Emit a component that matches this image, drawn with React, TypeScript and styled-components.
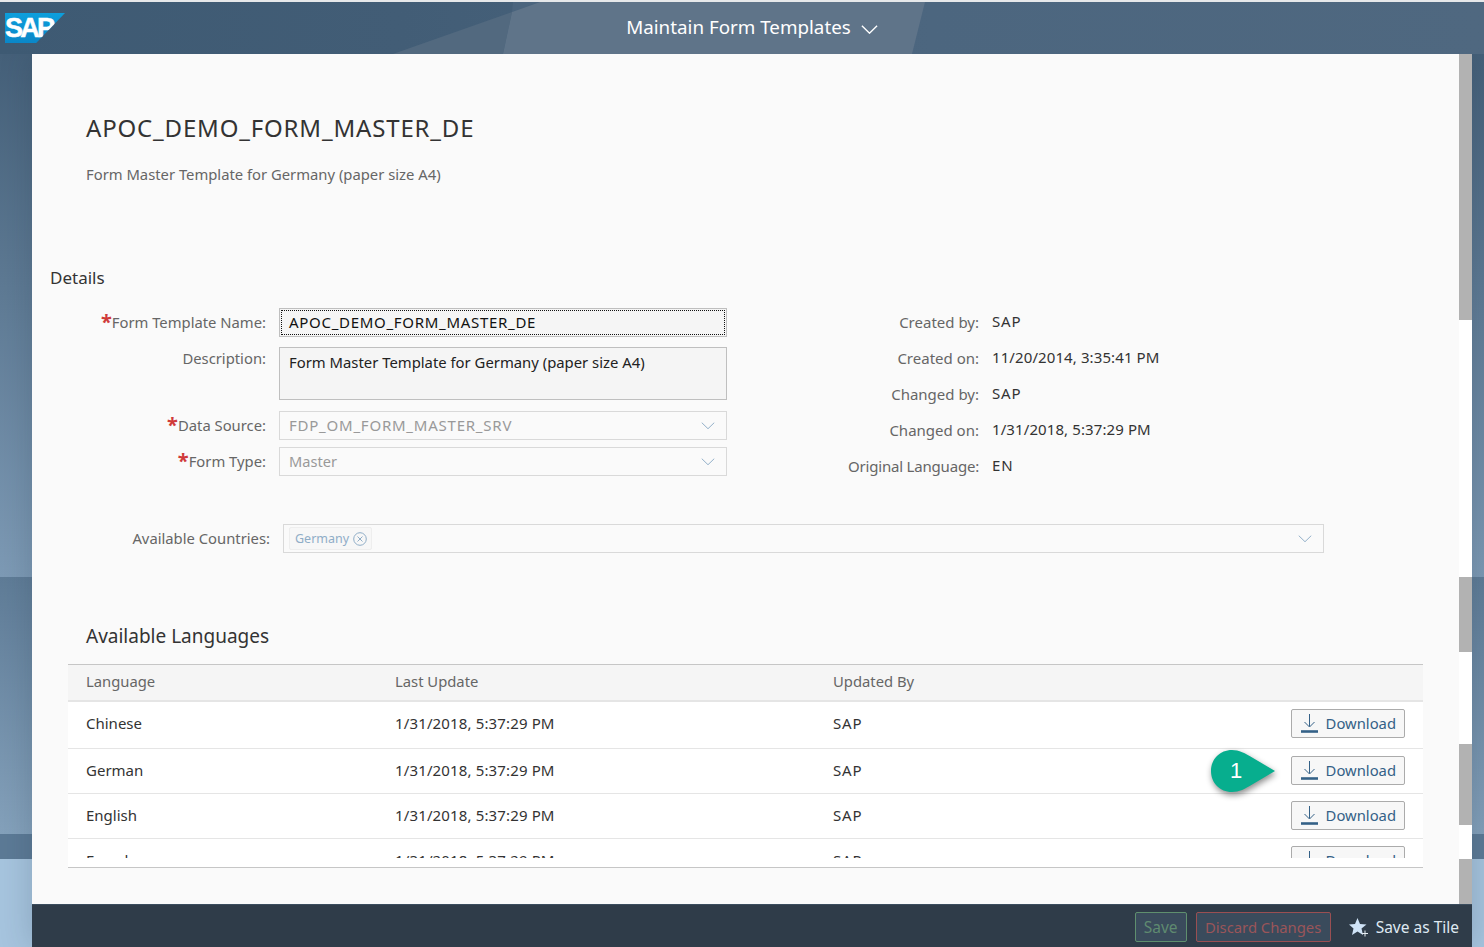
import React from "react";
import styled, { createGlobalStyle } from "styled-components";

const Global = createGlobalStyle`
  html, body { margin: 0; padding: 0; height: 100%; overflow: hidden; }
  body { font-family: "Noto Sans", "Liberation Sans", sans-serif; }
`;

const Page = styled.div`
  position: relative;
  width: 1484px;
  height: 947px;
  overflow: hidden;
  display: flex;
  flex-direction: column;
  background:
    linear-gradient(to bottom,
      #3f5a73 0, #7d9ab5 577px,
      #5f7c97 577px, #84a1bb 834px,
      #5c7a96 834px, #5c7a96 859px,
      #a6c4de 859px, #a6c4de 947px);
`;

const Header = styled.header`
  position: relative;
  flex: 0 0 54px;
  box-sizing: border-box;
  border-top: 2px solid #e6e8ea;
  display: flex;
  align-items: center;
  justify-content: center;
  background: linear-gradient(to right, #3e5a73 0, #425d76 400px, #4c667f 930px, #4f6880 100%);
`;

const HeaderArt = styled.svg`
  position: absolute;
  left: 0;
  top: 0;
  width: 1484px;
  height: 52px;
`;

const LogoShape = styled.div`
  position: absolute;
  left: 5px;
  top: 11px;
  width: 60px;
  height: 30px;
  box-sizing: border-box;
  clip-path: polygon(0 0, 100% 0, 52% 100%, 0 100%);
  background: linear-gradient(to bottom, #0d9fdc, #0a87c8);
  color: #fff;
  font: 700 27px/30px "Liberation Sans", sans-serif;
  letter-spacing: -2.7px;
  -webkit-text-stroke: 0.5px #fff;
`;

const AppTitle = styled.button`
  position: relative;
  display: flex;
  align-items: center;
  gap: 10px;
  padding: 0;
  margin: 0 0 3px 20px;
  border: 0;
  background: none;
  color: #fff;
  font-family: "Noto Sans", sans-serif;
  font-size: 18.8px;
  line-height: 26px;
  & > svg { transform: translateY(3px); }
`;

const Middle = styled.div`
  flex: 1;
  min-height: 0;
  display: flex;
  padding: 0 12px 0 32px;
`;

const Column = styled.div`
  flex: 1;
  min-width: 0;
  display: flex;
  flex-direction: column;
  box-shadow: 0 0 30px rgba(30, 50, 70, 0.22);
`;

const Row = styled.div`
  flex: 1;
  min-height: 0;
  display: flex;
`;

const Panel = styled.main`
  position: relative;
  flex: 1;
  min-width: 0;
  box-sizing: border-box;
  background: #fafafa;
  color: #333;
  padding-top: 59px;
`;

const ScrollBar = styled.div`
  flex: 0 0 13px;
  display: flex;
  flex-direction: column;
  background: #fff;
`;

const Thumb = styled.div<{ $h: number; $on?: boolean }>`
  flex: 0 0 ${(p) => p.$h}px;
  background: ${(p) => (p.$on ? "#b2b2b2" : "#fff")};
`;

const Title = styled.h1`
  margin: 0 0 0 54px;
  font-size: 24px;
  letter-spacing: 0.83px;
  line-height: 30px;
  font-weight: 400;
  color: #333;
`;

const Subtitle = styled.p`
  margin: 21px 0 0 54px;
  font-size: 14.8px;
  line-height: 20px;
  color: #666;
`;

const SectionTitle = styled.h2`
  margin: 82px 0 0 18px;
  font-size: 17px;
  line-height: 24px;
  font-weight: 400;
  color: #333;
`;

const FormGrid = styled.div`
  display: flex;
  margin-top: 18px;
  height: 168px;
`;

const LeftForm = styled.div`
  flex: 0 0 695px;
  display: flex;
  flex-direction: column;
`;

const RightForm = styled.div`
  flex: 1;
  display: flex;
  flex-direction: column;
  gap: 8px;
  margin-top: -1px;
`;

const FieldRow = styled.div<{ $mt?: number }>`
  display: flex;
  align-items: flex-start;
  margin-top: ${(p) => p.$mt ?? 0}px;
`;

const Label = styled.label<{ $w?: number; $lh?: number }>`
  flex: 0 0 ${(p) => p.$w ?? 234}px;
  box-sizing: border-box;
  text-align: right;
  font-size: 14.8px;
  line-height: ${(p) => p.$lh ?? 28}px;
  color: #666;
`;

const Req = styled.span`
  color: #d03a3a;
  font-size: 20px;
  line-height: 10px;
  font-weight: 700;
  vertical-align: -1px;
`;

const Input = styled.div<{ $focus?: boolean }>`
  position: relative;
  box-sizing: border-box;
  margin-left: 13px;
  width: 448px;
  height: 29px;
  border: 1px solid ${(p) => (p.$focus ? "#bfbfbf" : "#d9d9d9")};
  background: ${(p) => (p.$focus ? "#f5f5f5" : "#fafafa")};
  padding: 0 11px 0 9px;
  font-size: 15px;
  line-height: 27px;
  color: #999;
  display: flex;
  justify-content: space-between;
  align-items: center;
  &::after {
    content: ${(p) => (p.$focus ? '""' : "none")};
    position: absolute;
    inset: 1px;
    border: 1px dotted #111;
  }
`;

const Area = styled.div`
  box-sizing: border-box;
  margin-left: 13px;
  width: 448px;
  height: 53px;
  border: 1px solid #bfbfbf;
  background: #f5f5f5;
  padding: 3px 9px;
  font-size: 14.85px;
  line-height: 22px;
  color: #222;
`;

const InputText = styled.span<{ $dark?: boolean; $ls?: number; $fs?: number }>`
  color: ${(p) => (p.$dark ? "#111" : "#999")};
  letter-spacing: ${(p) => p.$ls ?? 0}px;
  font-size: ${(p) => p.$fs ?? 15}px;
`;

const ReadRow = styled.div`
  display: flex;
  height: 28px;
  align-items: center;
`;

const ReadLabel = styled.div<{ $ls?: number }>`
  flex: 0 0 252px;
  text-align: right;
  font-size: 15px;
  letter-spacing: ${(p) => p.$ls ?? 0}px;
  color: #666;
  line-height: 28px;
  padding-top: 1px;
`;

const ReadValue = styled.div<{ $caps?: boolean }>`
  margin-left: 13px;
  font-size: 15px;
  letter-spacing: ${(p) => (p.$caps ? "0.8px" : "0.1px")};
  color: #333;
  line-height: 28px;
  margin-top: -1px;
`;

const CountryField = styled.div`
  box-sizing: border-box;
  margin-left: 13px;
  width: 1041px;
  height: 29px;
  border: 1px solid #d9d9d9;
  padding: 0 11px 0 5px;
  display: flex;
  justify-content: space-between;
  align-items: center;
`;

const Token = styled.span`
  box-sizing: border-box;
  height: 23px;
  display: inline-flex;
  align-items: center;
  gap: 4px;
  padding: 0 4px 0 5px;
  background: #f7f7f7;
  border: 1px solid #eee;
  border-radius: 2px;
  font-size: 12.5px;
  color: #8fadc7;
`;

const CountriesRow = styled.div`
  display: flex;
  margin: 48px 0 0 36px;
`;

const TableTitle = styled.h2`
  margin: 70px 0 0 54px;
  font-size: 19px;
  line-height: 26px;
  font-weight: 400;
  color: #333;
`;

const Table = styled.div`
  margin: 15px 36px 0;
  width: 1355px;
`;

const cols = "327px 438px 1fr 132px";

const HeadRow = styled.div`
  display: grid;
  grid-template-columns: ${cols};
  height: 38px;
  box-sizing: border-box;
  border-top: 1px solid #c6c6c6;
  border-bottom: 2px solid #e5e5e5;
  padding-bottom: 4px;
  background: #f5f5f5;
  align-items: center;
  font-size: 14.8px;
  color: #666;
  & > span:first-child { padding-left: 18px; }
`;

const Body = styled.div`
  height: 166px;
  box-sizing: border-box;
  background: #fff;
  border-bottom: 1px solid #c6c6c6;
`;

const Clip = styled.div`
  height: 156px;
  overflow: hidden;
`;

const DataRow = styled.div<{ $h: number; $pb: number }>`
  display: grid;
  grid-template-columns: ${cols};
  box-sizing: border-box;
  height: ${(p) => p.$h}px;
  padding-bottom: ${(p) => p.$pb}px;
  border-bottom: 1px solid #e5e5e5;
  align-items: center;
  font-size: 15px;
  color: #333;
  & > span:first-child { padding-left: 18px; }
`;

const DateCell = styled.span`
  letter-spacing: 0.14px;
`;

const CapsCell = styled.span`
  letter-spacing: 0.8px;
`;

const DownloadBtn = styled.button`
  box-sizing: border-box;
  width: 114px;
  height: 29px;
  padding: 0 8px 0 9px;
  border: 1px solid #ababab;
  border-radius: 2px;
  background: #f7f7f7;
  color: #346187;
  display: flex;
  align-items: center;
  justify-content: space-between;
  font-family: "Noto Sans", sans-serif;
  font-size: 14.8px;
`;

const Callout = styled.div`
  position: absolute;
  left: 1179px;
  top: 696px;
  width: 66px;
  height: 44px;
  color: #fff;
  font: 22px/42px "Liberation Sans", sans-serif;
`;

const CalloutShape = styled.svg`
  overflow: visible;
  filter: drop-shadow(1px 3px 3px rgba(0, 0, 0, 0.45));
`;

const CalloutNum = styled.span`
  position: absolute;
  left: 19px;
  top: 0;
`;

const Footer = styled.footer`
  flex: 0 0 43px;
  box-sizing: border-box;
  background: #2f3c49;
  border-top: 1px solid #3b4d5e;
  display: flex;
  align-items: center;
  justify-content: flex-end;
  gap: 9px;
  padding: 2px 13px 0 0;
`;

const FootBtn = styled.button<{ $c: string; $t: string; $fs: number; $w: number }>`
  box-sizing: border-box;
  width: ${(p) => p.$w}px;
  height: 30px;
  padding: 0;
  border: 1px solid ${(p) => p.$c};
  border-radius: 2px;
  background: #3a4b5c;
  color: ${(p) => p.$t};
  font-family: "Noto Sans", sans-serif;
  font-size: ${(p) => p.$fs}px;
`;

const TileBtn = styled.button`
  display: flex;
  align-items: center;
  gap: 7px;
  margin-left: 9px;
  padding: 0;
  border: 0;
  background: none;
  color: #dfe9f2;
  font-family: "Noto Sans", sans-serif;
  font-size: 15.5px;
`;

const Chevron = ({ c = "#8fadc7", w = 14 }: { c?: string; w?: number }) => (
  <svg width={w} height={w * 0.55} viewBox="0 0 14 8" fill="none">
    <path d="M.5.7 7 7 13.5.7" stroke={c} strokeWidth={w > 14 ? 1.2 : 1} />
  </svg>
);

const DownloadIcon = () => (
  <svg width="17" height="19" viewBox="0 0 17 19" fill="none">
    <path d="M8.5 0v12.5M3.5 8l5 5 5-5" stroke="#346187" strokeWidth="1" />
    <path d="M0 17.5h17" stroke="#346187" strokeWidth="2.6" />
  </svg>
);

const rows = [
  { l: "Chinese", h: 47, pb: 4 },
  { l: "German", h: 45, pb: 2 },
  { l: "English", h: 45, pb: 2 },
  { l: "French", h: 45, pb: 2 },
];

const Segs: [number, boolean][] = [
  [266, true], [257, false], [75, true], [92, false], [81, true], [34, false], [45, true],
];

const Read = ({ k, v, caps, ls }: { k: string; v: string; caps?: boolean; ls?: number }) => (
  <ReadRow>
    <ReadLabel $ls={ls}>{k}</ReadLabel>
    <ReadValue $caps={caps}>{v}</ReadValue>
  </ReadRow>
);

export default function App() {
  return (
    <Page>
      <Global />
      <Header>
        <HeaderArt viewBox="0 0 1484 52">
          <polygon points="393,52 512,10 503,52" fill="#52697f" />
          <polygon points="513,0 540,0 512,10" fill="#4b657e" />
          <polygon points="503,52 512,10 540,0 925,0 912,52" fill="#5f7489" />
        </HeaderArt>
        <LogoShape>SAP</LogoShape>
        <AppTitle>
          Maintain Form Templates
          <Chevron c="#fff" w={17} />
        </AppTitle>
      </Header>
      <Middle>
        <Column>
          <Row>
            <Panel>
              <Title>APOC_DEMO_FORM_MASTER_DE</Title>
              <Subtitle>Form Master Template for Germany (paper size A4)</Subtitle>
              <SectionTitle>Details</SectionTitle>
              <FormGrid>
                <LeftForm>
                  <FieldRow>
                    <Label><Req>*</Req>Form Template Name:</Label>
                    <Input $focus><InputText $dark $ls={0.7}>APOC_DEMO_FORM_MASTER_DE</InputText></Input>
                  </FieldRow>
                  <FieldRow $mt={10}>
                    <Label $lh={22}>Description:</Label>
                    <Area>Form Master Template for Germany (paper size A4)</Area>
                  </FieldRow>
                  <FieldRow $mt={11}>
                    <Label><Req>*</Req>Data Source:</Label>
                    <Input><InputText $ls={0.77}>FDP_OM_FORM_MASTER_SRV</InputText><Chevron /></Input>
                  </FieldRow>
                  <FieldRow $mt={7}>
                    <Label><Req>*</Req>Form Type:</Label>
                    <Input><InputText $fs={14.6}>Master</InputText><Chevron /></Input>
                  </FieldRow>
                </LeftForm>
                <RightForm>
                  <Read k="Created by:" v="SAP" caps />
                  <Read k="Created on:" v="11/20/2014, 3:35:41 PM" />
                  <Read k="Changed by:" v="SAP" caps />
                  <Read k="Changed on:" v="1/31/2018, 5:37:29 PM" />
                  <Read k="Original Language:" v="EN" caps ls={-0.2} />
                </RightForm>
              </FormGrid>
              <CountriesRow>
                <Label $w={202}>Available Countries:</Label>
                <CountryField>
                  <Token>
                    Germany
                    <svg width="14" height="14" viewBox="0 0 14 14" fill="none" stroke="#8fadc7">
                      <circle cx="7" cy="7" r="6.3" />
                      <path d="M4.5 4.5l5 5M9.5 4.5l-5 5" />
                    </svg>
                  </Token>
                  <Chevron />
                </CountryField>
              </CountriesRow>
              <TableTitle>Available Languages</TableTitle>
              <Table>
                <HeadRow>
                  <span>Language</span>
                  <span>Last Update</span>
                  <span>Updated By</span>
                  <span />
                </HeadRow>
                <Body>
                  <Clip>
                    {rows.map((r) => (
                      <DataRow key={r.l} $h={r.h} $pb={r.pb}>
                        <span>{r.l}</span>
                        <DateCell>1/31/2018, 5:37:29 PM</DateCell>
                        <CapsCell>SAP</CapsCell>
                        <DownloadBtn><DownloadIcon />Download</DownloadBtn>
                      </DataRow>
                    ))}
                  </Clip>
                </Body>
              </Table>
              <Callout>
                <CalloutShape width="70" height="50" viewBox="0 0 70 50">
                  <path d="M21 0C28 0 34 3 42 8L64 21 42 34C34 39 28 42 21 42 9 42 0 33 0 21S9 0 21 0Z" fill="#07ae8e" />
                </CalloutShape>
                <CalloutNum>1</CalloutNum>
              </Callout>
            </Panel>
            <ScrollBar>
              {Segs.map(([h, on], i) => <Thumb key={i} $h={h} $on={on} />)}
            </ScrollBar>
          </Row>
          <Footer>
            <FootBtn $c="#5f8f6e" $t="#5f8a70" $fs={15.5} $w={52}>Save</FootBtn>
            <FootBtn $c="#9a4f52" $t="#9a5559" $fs={14.8} $w={135}>Discard Changes</FootBtn>
            <TileBtn>
              <svg width="20" height="19" viewBox="0 0 20 19">
                <polygon points="8.5,0 11,6 17.5,6.5 12.5,10.5 14,17 8.5,13.5 3,17 4.5,10.5 0,6.5 6,6" fill="#cfe3f7" />
                <path d="M13 15.5h6M16 12.5v6" stroke="#e6edf3" strokeWidth="1" />
              </svg>
              Save as Tile
            </TileBtn>
          </Footer>
        </Column>
      </Middle>
    </Page>
  );
}
